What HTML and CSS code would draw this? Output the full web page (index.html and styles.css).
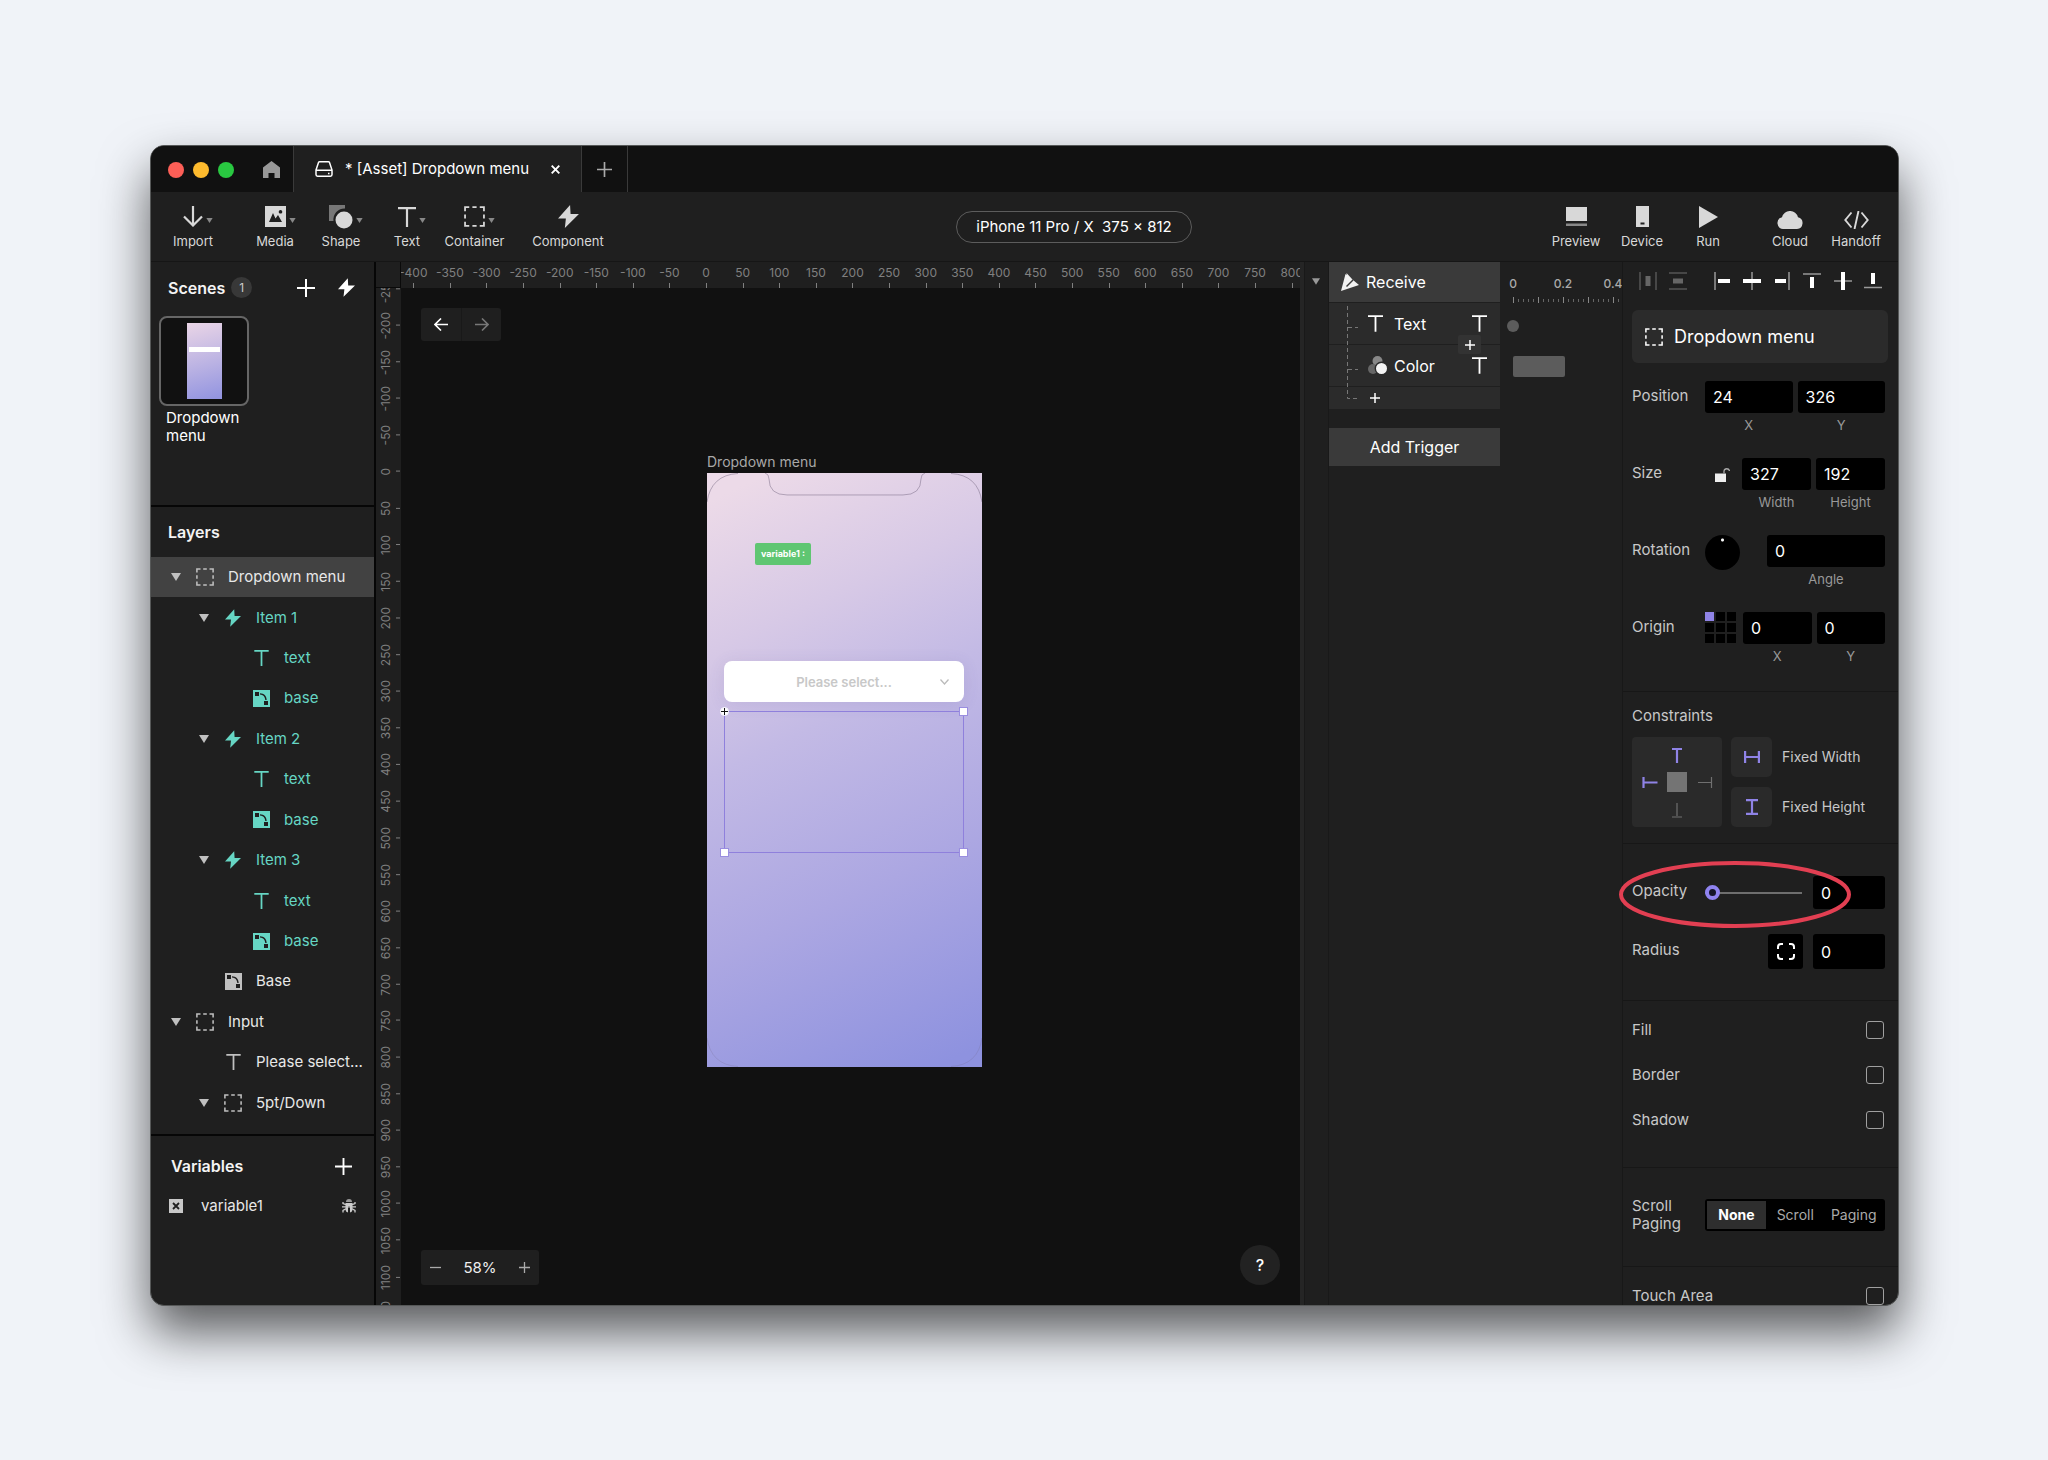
FILE: index.html
```html
<!DOCTYPE html>
<html lang="en">
<head>
<meta charset="utf-8">
<meta name="viewport" content="width=device-width, initial-scale=1">
<title>[Asset] Dropdown menu</title>
<link rel="stylesheet" href="styles.css">
</head>
<body>
<svg class="sprite" aria-hidden="true">
  <symbol id="i-bolt" viewBox="0 0 20 22"><path d="M11.500 0 0 13h7.500L6.500 22 20 8.500h-8z" fill="currentColor"/></symbol>
  <symbol id="i-plus" viewBox="0 0 18 18"><path d="M9 0v18M0 9h18" stroke="currentColor" stroke-width="2" fill="none"/></symbol>
  <symbol id="i-type" viewBox="0 0 18 20"><path d="M0 1.200h18M9 1.200V20" stroke="currentColor" stroke-width="2.200" fill="none"/></symbol>
  <symbol id="i-frame" viewBox="0 0 20 20"><path d="M1 5V1h4M15 1h4v4M19 15v4h-4M5 19H1v-4M8 1h4M19 8v4M12 19H8M1 12V8" stroke="currentColor" stroke-width="1.700" fill="none"/></symbol>
  <symbol id="i-base" viewBox="0 0 17 17"><path fill-rule="evenodd" fill="currentColor" d="M0 0h17v17H0zM2 2v4h4V2zM11 11v4h4v-4zM7 3.200v1.300c3.200.2 5 2 5.300 5.500h1.400c-.3-4.500-2.700-6.700-6.700-6.800z"/></symbol>
  <symbol id="i-caret" viewBox="0 0 10 8"><path d="M0 0h10L5 8z" fill="currentColor"/></symbol>
</svg>

<div class="window">
  <header class="titlebar">
    <div class="lights"><i class="light red"></i><i class="light yellow"></i><i class="light green"></i></div>
    <button class="home" aria-label="Home"><svg width="17" height="18" viewBox="0 0 17 18"><path d="M8.500 0 17 6.500V17H11.500v-5h-6v5H0V6.500z" fill="currentColor"/></svg></button>
    <div class="tab">
      <svg width="18" height="16" viewBox="0 0 18 16" fill="none" stroke="currentColor" stroke-width="1.500"><path d="M1 9 3.500 1.500Q3.800.8 4.600.8h8.800q.8 0 1.100.7L17 9v4.500q0 1.700-1.500 1.700h-13Q1 15.200 1 13.500zM1 9.200h16M13 12.400h1.500"/></svg>
      <span>* [Asset] Dropdown menu</span>
      <button class="tab-close" aria-label="Close tab"><svg width="9" height="9" viewBox="0 0 9 9"><path d="m.7.7 7.600 7.600M8.300.7.700 8.300" stroke="currentColor" stroke-width="1.900"/></svg></button>
    </div>
    <button class="tab-add" aria-label="New tab"><svg width="15" height="15"><use href="#i-plus"/></svg></button>
  </header>

  <nav class="toolbar">
    <div class="tools">
      <button class="tool tool-first"><span class="tool-icon"><svg width="20" height="21" viewBox="0 0 20 21" fill="none" stroke="currentColor" stroke-width="2.200"><path d="M10 0v19.500M1 10.500l9 9 9-9"/></svg><svg class="more" width="7" height="5"><use href="#i-caret"/></svg></span>Import</button>
      <button class="tool"><span class="tool-icon"><svg width="21" height="21" viewBox="0 0 21 21"><path fill="currentColor" fill-rule="evenodd" d="M0 0h21v21H0zM4 16h13l-4-7-2.500 3.500L8 7zM15.500 4a1.800 1.800 0 1 0 .01 0z"/></svg><svg class="more" width="7" height="5"><use href="#i-caret"/></svg></span>Media</button>
      <button class="tool"><span class="tool-icon"><svg width="24" height="24" viewBox="0 0 24 24"><path d="M0 0h16v3.500A11 11 0 0 0 4.500 16H0z" fill="#777"/><circle cx="15" cy="15" r="8.500" fill="currentColor"/></svg><svg class="more" width="7" height="5"><use href="#i-caret"/></svg></span>Shape</button>
      <button class="tool"><span class="tool-icon"><svg width="18" height="20"><use href="#i-type"/></svg><svg class="more" width="7" height="5"><use href="#i-caret"/></svg></span>Text</button>
      <button class="tool tool-mid"><span class="tool-icon"><svg width="21" height="21"><use href="#i-frame"/></svg><svg class="more" width="7" height="5"><use href="#i-caret"/></svg></span>Container</button>
      <button class="tool tool-wide"><span class="tool-icon"><svg width="21" height="23"><use href="#i-bolt"/></svg></span>Component</button>
    </div>
    <button class="device">iPhone 11 Pro / X &nbsp;375 × 812</button>
    <div class="tools">
      <button class="tool"><span class="tool-icon"><svg width="21" height="20" viewBox="0 0 21 20"><path fill="currentColor" d="M0 0h21v14H0z"/><path fill="#888" d="M0 16.500h21V19H0z"/></svg></span>Preview</button>
      <button class="tool"><span class="tool-icon"><svg width="13" height="21" viewBox="0 0 13 21"><path fill="currentColor" fill-rule="evenodd" d="M0 0h13v21H0zM4.500 16.500v2h4v-2z"/></svg></span>Device</button>
      <button class="tool"><span class="tool-icon"><svg width="19" height="22" viewBox="0 0 19 22"><path fill="currentColor" d="m0 0 19 11L0 22z"/></svg></span>Run</button>
      <button class="tool tool-gap"><span class="tool-icon tool-icon-low"><svg width="26" height="18" viewBox="0 0 26 18"><path fill="currentColor" d="M6 18a6 6 0 0 1-1-11.800A8 8 0 0 1 13 0a8 8 0 0 1 8 6.200A6 6 0 0 1 20 18z"/></svg></span>Cloud</button>
      <button class="tool"><span class="tool-icon tool-icon-low"><svg width="25" height="18" viewBox="0 0 25 18" fill="none" stroke="currentColor" stroke-width="1.900"><path d="M7.500 1.500 1.300 9l6.200 7.500M17.500 1.500 23.700 9l-6.200 7.500M14.500 0l-4 18"/></svg></span>Handoff</button>
    </div>
  </nav>

  <div class="workspace">
    <aside class="sidebar">
      <section class="scenes">
        <div class="side-head">
          <h2>Scenes</h2><span class="count">1</span>
          <button class="push" aria-label="Add scene"><svg width="18" height="18"><use href="#i-plus"/></svg></button>
          <button class="bolt-btn" aria-label="Scene actions"><svg width="17" height="19"><use href="#i-bolt"/></svg></button>
        </div>
        <button class="scene"><span class="thumb"><span class="thumb-phone"><span class="thumb-bar"></span></span></span><span class="scene-name">Dropdown menu</span></button>
      </section>
      <section class="layers">
        <h2>Layers</h2>
        <ul class="tree">
          <li class="row selected"><svg class="caret" width="10" height="8"><use href="#i-caret"/></svg><span class="ico"><svg width="18" height="18"><use href="#i-frame"/></svg></span>Dropdown menu</li>
          <li class="row l1 comp"><svg class="caret" width="10" height="8"><use href="#i-caret"/></svg><span class="ico"><svg width="16" height="18"><use href="#i-bolt"/></svg></span>Item 1</li>
          <li class="row l2 comp"><span class="caret"></span><span class="ico"><svg width="15" height="16"><use href="#i-type"/></svg></span>text</li>
          <li class="row l2 comp"><span class="caret"></span><span class="ico"><svg width="17" height="17"><use href="#i-base"/></svg></span>base</li>
          <li class="row l1 comp"><svg class="caret" width="10" height="8"><use href="#i-caret"/></svg><span class="ico"><svg width="16" height="18"><use href="#i-bolt"/></svg></span>Item 2</li>
          <li class="row l2 comp"><span class="caret"></span><span class="ico"><svg width="15" height="16"><use href="#i-type"/></svg></span>text</li>
          <li class="row l2 comp"><span class="caret"></span><span class="ico"><svg width="17" height="17"><use href="#i-base"/></svg></span>base</li>
          <li class="row l1 comp"><svg class="caret" width="10" height="8"><use href="#i-caret"/></svg><span class="ico"><svg width="16" height="18"><use href="#i-bolt"/></svg></span>Item 3</li>
          <li class="row l2 comp"><span class="caret"></span><span class="ico"><svg width="15" height="16"><use href="#i-type"/></svg></span>text</li>
          <li class="row l2 comp"><span class="caret"></span><span class="ico"><svg width="17" height="17"><use href="#i-base"/></svg></span>base</li>
          <li class="row l1"><span class="caret"></span><span class="ico"><svg width="17" height="17"><use href="#i-base"/></svg></span>Base</li>
          <li class="row"><svg class="caret" width="10" height="8"><use href="#i-caret"/></svg><span class="ico"><svg width="18" height="18"><use href="#i-frame"/></svg></span>Input</li>
          <li class="row l1"><span class="caret"></span><span class="ico"><svg width="15" height="16"><use href="#i-type"/></svg></span>Please select...</li>
          <li class="row l1"><svg class="caret" width="10" height="8"><use href="#i-caret"/></svg><span class="ico"><svg width="18" height="18"><use href="#i-frame"/></svg></span>5pt/Down</li>
        </ul>
      </section>
      <section class="variables">
        <div class="var-head"><h2>Variables</h2><button class="push" aria-label="Add variable"><svg width="17" height="17"><use href="#i-plus"/></svg></button></div>
        <div class="var-row">
          <svg width="14" height="14" viewBox="0 0 14 14"><path d="M0 0h14v14H0z" fill="#c8c8c8"/><path d="m4 4 6 6M10 4l-6 6" stroke="#1f1f1f" stroke-width="1.800"/></svg>
          <span>variable1</span>
          <button class="push" aria-label="Debug variable"><svg width="14" height="14" viewBox="0 0 14 14"><path d="M4 3a3 3 0 0 1 6 0z" fill="#999"/><path d="M3.500 4h7v6q0 3-2.500 3.500V7H6v6.500Q3.500 13 3.500 10zM0 7.200h14v1.300H0z" fill="#ccc"/><path d="M1 3v1.500l3 1.200M13 3v1.500l-3 1.200M1 13.500v-2L4 9.800M13 13.500v-2L10 9.800" stroke="#ccc" stroke-width="1.300" fill="none"/></svg></button>
        </div>
      </section>
    </aside>

    <main class="stage">
      <div class="corner"></div>
      <div class="ruler-h"><div class="marks-h"><span>-400</span><span>-350</span><span>-300</span><span>-250</span><span>-200</span><span>-150</span><span>-100</span><span>-50</span><span>0</span><span>50</span><span>100</span><span>150</span><span>200</span><span>250</span><span>300</span><span>350</span><span>400</span><span>450</span><span>500</span><span>550</span><span>600</span><span>650</span><span>700</span><span>750</span><span>800</span></div></div>
      <div class="ruler-v"><div class="marks-v"><span>-250</span><span>-200</span><span>-150</span><span>-100</span><span>-50</span><span>0</span><span>50</span><span>100</span><span>150</span><span>200</span><span>250</span><span>300</span><span>350</span><span>400</span><span>450</span><span>500</span><span>550</span><span>600</span><span>650</span><span>700</span><span>750</span><span>800</span><span>850</span><span>900</span><span>950</span><span>1000</span><span>1050</span><span>1100</span><span>1150</span></div></div>
      <div class="canvas">
        <div class="history">
          <button aria-label="Back"><svg width="14" height="13" viewBox="0 0 14 13" fill="none" stroke="currentColor" stroke-width="1.600"><path d="M14 6.500H1M7 .5l-6 6 6 6"/></svg></button>
          <button class="off" aria-label="Forward"><svg width="14" height="13" viewBox="0 0 14 13" fill="none" stroke="currentColor" stroke-width="1.600"><path d="M0 6.500h13M7 .5l6 6-6 6"/></svg></button>
        </div>
        <div class="artboard">
          <div class="artboard-name">Dropdown menu</div>
          <div class="phone">
            <svg class="bezel" viewBox="0 0 275 595" preserveAspectRatio="none" fill="none" stroke="#6b5f78" stroke-opacity=".45">
              <path d="M0 29Q4 2 31 .5M244 .5Q271 2 275 29M58 0q4 1 4 6 0 16 18 16h116q18 0 18-16 0-5 4-6"/>
              <path stroke-opacity=".2" d="M0 566Q4 593 31 594.500M244 594.500Q271 593 275 566"/>
            </svg>
            <div class="badge">variable1 :</div>
            <div class="select">Please select...<svg width="9" height="6" viewBox="0 0 9 6" fill="none" stroke="#bbb" stroke-width="1.300"><path d="m.5.500 4 4.500 4-4.500"/></svg></div>
            <div class="selection"><i class="pivot"></i><i class="handle ne"></i><i class="handle sw"></i><i class="handle se"></i></div>
          </div>
        </div>
        <div class="zoom"><button aria-label="Zoom out"><svg width="11" height="11" viewBox="0 0 11 11"><path d="M0 5.500h11" stroke="currentColor" stroke-width="1.300"/></svg></button><output>58%</output><button aria-label="Zoom in"><svg width="11" height="11" viewBox="0 0 11 11"><path d="M0 5.500h11M5.500 0v11" stroke="currentColor" stroke-width="1.300"/></svg></button></div>
        <button class="help">?</button>
      </div>
    </main>

    <section class="interactions">
      <div class="gutter"><svg width="8" height="7"><use href="#i-caret"/></svg></div>
      <div class="triggers">
        <div class="trigger">
          <svg width="18" height="18" viewBox="0 0 18 18"><path d="M5.500 0 11 6 6.500 12zM12 7l6 5L0 18 4.500 1z" fill="#f2f2f2"/><path d="m12 7-6.500 6.500" stroke="#3a3a3a" stroke-width="1.500"/></svg>Receive
        </div>
        <div class="responses">
          <svg class="branches" width="12" height="96" viewBox="0 0 12 96" fill="none" stroke="#777" stroke-dasharray="4 3"><path d="M.5 0v92.500H11M1 21.500h10M1 63.500h10"/></svg>
          <div class="resp"><svg width="15" height="17"><use href="#i-type"/></svg><span>Text</span><svg class="push" width="15" height="17"><use href="#i-type"/></svg></div>
          <div class="resp"><svg width="19" height="19" viewBox="0 0 19 19"><circle cx="9.500" cy="5" r="5" fill="#888"/><circle cx="5" cy="13" r="5" fill="#666"/><circle cx="13.500" cy="12.500" r="6.200" fill="#f4f4f4" stroke="#2a2a2a" stroke-width="1.400"/></svg><span>Color</span><svg class="push" width="15" height="17"><use href="#i-type"/></svg></div>
          <div class="resp resp-add"><button aria-label="Add response"><svg width="10" height="10" viewBox="0 0 10 10"><path d="M5 0v10M0 5h10" stroke="currentColor" stroke-width="1.500"/></svg></button></div>
          <button class="insert" aria-label="Insert response"><svg width="10" height="10" viewBox="0 0 10 10"><path d="M5 0v10M0 5h10" stroke="currentColor" stroke-width="1.500"/></svg></button>
        </div>
        <button class="add-trigger">Add Trigger</button>
      </div>
      <div class="timeline">
        <div class="times"><span>0</span><span>0.2</span><span>0.4</span></div>
        <div class="time-ticks"></div>
        <div class="instant"></div>
        <div class="clip"></div>
      </div>
    </section>

    <aside class="inspector">
      <div class="align">
        <button class="off" aria-label="Distribute horizontally"><svg width="18" height="18" viewBox="0 0 18 18"><path d="M1 0v18M17 0v18" stroke="#555" stroke-width="1.500"/><path d="M6.500 4h5v10h-5z" fill="#666"/></svg></button>
        <button class="off wide" aria-label="Distribute vertically"><svg width="18" height="18" viewBox="0 0 18 18"><path d="M0 1h18M0 17h18" stroke="#555" stroke-width="1.500"/><path d="M4 6.500h10v5H4z" fill="#666"/></svg></button>
        <button aria-label="Align left"><svg width="18" height="18" viewBox="0 0 18 18"><path d="M2 0v18" stroke="#999" stroke-width="1.500"/><path d="M5 7h12v4H5z" fill="#fff"/></svg></button>
        <button aria-label="Align center"><svg width="18" height="18" viewBox="0 0 18 18"><path d="M9 0v18" stroke="#999" stroke-width="1.500"/><path d="M0 7h18v4H0z" fill="#fff"/></svg></button>
        <button aria-label="Align right"><svg width="18" height="18" viewBox="0 0 18 18"><path d="M16 0v18" stroke="#999" stroke-width="1.500"/><path d="M2 7h11v4H2z" fill="#fff"/></svg></button>
        <button aria-label="Align top"><svg width="18" height="18" viewBox="0 0 18 18"><path d="M0 2h18" stroke="#999" stroke-width="1.500"/><path d="M7 5h4v11H7z" fill="#fff"/></svg></button>
        <button aria-label="Align middle"><svg width="18" height="18" viewBox="0 0 18 18"><path d="M0 9h18" stroke="#999" stroke-width="1.500"/><path d="M7 0h4v18H7z" fill="#fff"/></svg></button>
        <button aria-label="Align bottom"><svg width="18" height="18" viewBox="0 0 18 18"><path d="M0 15.500h18" stroke="#999" stroke-width="1.500"/><path d="M7 1h4v11H7z" fill="#fff"/></svg></button>
      </div>
      <div class="object"><svg width="18" height="18"><use href="#i-frame"/></svg>Dropdown menu</div>

      <div class="props">
        <div class="prop"><span class="name">Position</span>
          <div class="field"><input id="px" value="24"><label for="px">X</label></div>
          <div class="field"><input id="py" value="326"><label for="py">Y</label></div>
        </div>
        <div class="prop"><span class="name">Size</span>
          <button class="lock" aria-label="Lock ratio"><svg width="15" height="15" viewBox="0 0 15 15"><path d="M0 6.500h11V15H0z" fill="#eee"/><path d="M9 6.500V4a2.800 2.800 0 0 1 5.500 0" stroke="#aaa" stroke-width="1.300" fill="none"/></svg></button>
          <div class="field"><input id="pw" value="327"><label for="pw">Width</label></div>
          <div class="field"><input id="ph" value="192"><label for="ph">Height</label></div>
        </div>
        <div class="prop"><span class="name">Rotation</span>
          <div class="dial"></div>
          <div class="field"><input id="pa" value="0"><label for="pa">Angle</label></div>
        </div>
        <div class="prop"><span class="name">Origin</span>
          <div class="origin"><i class="on"></i><i></i><i></i><i></i><i></i><i></i><i></i><i></i><i></i></div>
          <div class="field"><input id="ox" value="0"><label for="ox">X</label></div>
          <div class="field"><input id="oy" value="0"><label for="oy">Y</label></div>
        </div>
      </div>

      <section class="group constraints">
        <h3>Constraints</h3>
        <div class="pins-row">
          <svg class="pins" width="90" height="90" viewBox="0 0 90 90" fill="none"><path d="M40 12h10M45 12v14M11.500 40v11M11.500 45.500h14" stroke="#8f83e6" stroke-width="2.200"/><path d="M66 45.500h13M79.500 40v11M45 66v13M40 80h10" stroke="#707070" stroke-width="1.200"/><path d="M35 35h20v20H35z" fill="#747474"/></svg>
          <div class="fixes">
            <button class="fix"><span><svg width="16" height="12" viewBox="0 0 16 12" stroke="#8f83e6" stroke-width="2.200"><path d="M1.100 0v12M14.900 0v12M1 6h14"/></svg></span>Fixed Width</button>
            <button class="fix"><span><svg width="12" height="16" viewBox="0 0 12 16" stroke="#8f83e6" stroke-width="2.200"><path d="M0 1.100h12M0 14.900h12M6 1v14"/></svg></span>Fixed Height</button>
          </div>
        </div>
      </section>

      <section class="group look">
        <div class="line"><label class="name" for="op">Opacity</label><input id="op" type="range" min="0" max="100" value="0"><input class="short" value="0" aria-label="Opacity value"></div>
        <div class="line"><label class="name" for="rad">Radius</label><button class="corners" aria-label="Separate corners"><svg width="18" height="17" viewBox="0 0 18 17" fill="none" stroke="#fff" stroke-width="2"><path d="M1 6V4q0-3 3-3h2M12 1h2q3 0 3 3v2M17 11v2q0 3-3 3h-2M6 16H4q-3 0-3-3v-2"/></svg></button><input class="short" id="rad" value="0"></div>
        <svg class="callout" viewBox="0 0 232 67" fill="none"><ellipse cx="116" cy="33.500" rx="114" ry="31.500" stroke="#e23f52" stroke-width="4"/></svg>
      </section>

      <section class="group checks">
        <label class="check">Fill<input type="checkbox"></label>
        <label class="check">Border<input type="checkbox"></label>
        <label class="check">Shadow<input type="checkbox"></label>
      </section>

      <section class="group paging">
        <span class="name">Scroll Paging</span>
        <div class="segments"><button class="active">None</button><button>Scroll</button><button>Paging</button></div>
      </section>

      <section class="group touch">
        <label class="check">Touch Area<input type="checkbox"></label>
      </section>
    </aside>
  </div>
</div>
</body>
</html>
```
FILE: styles.css
```css
* { box-sizing: border-box; }
body {
  margin: 0;
  height: 100vh;
  padding: 145px 149px 154px 150px;
  display: flex;
  background: #f0f3f8;
  font-family: Inter, "Liberation Sans", sans-serif;
  font-size: 15px;
  line-height: 18px;
  color: #fff;
}
.sprite { position: absolute; width: 0; height: 0; }
svg { display: block; flex: none; }
h2, h3, ul { margin: 0; padding: 0; list-style: none; }
h2 { font-size: 16px; line-height: 20px; font-weight: 600; color: #f4f4f4; }
button {
  padding: 0;
  border: 0;
  background: none;
  font: inherit;
  color: inherit;
  display: flex;
  align-items: center;
  justify-content: center;
}
input { font: inherit; }
.push { margin-left: auto; }

.window {
  flex: 1;
  min-width: 0;
  display: flex;
  flex-direction: column;
  overflow: hidden;
  background: #1f1f1f;
  border: 1px solid #565858;
  border-radius: 14px;
  box-shadow: 0 26px 50px rgba(0, 0, 0, .63);
}

/* title bar */
.titlebar { flex: none; display: flex; height: 46px; background: #111; }
.lights { display: flex; align-items: center; gap: 9px; padding: 2px 0 0 17px; width: 99px; }
.light { width: 16px; height: 16px; border-radius: 50%; }
.red { background: #fd5f57; }
.yellow { background: #febb2e; }
.green { background: #29c841; }
.home { width: 44px; padding-top: 2px; color: #999; border-right: 1px solid #3a3a3a; }
.tab {
  width: 288px;
  padding: 0 21px;
  display: flex;
  align-items: center;
  background: #1f1f1f;
  border-right: 1px solid #3a3a3a;
}
.tab span { margin-left: 12px; }
.tab-close { margin-left: auto; }
.tab-add { width: 46px; color: #aaa; border-right: 1px solid #3a3a3a; }

/* toolbar */
.toolbar {
  flex: none;
  height: 70px;
  padding: 0 9px;
  display: flex;
  align-items: center;
  justify-content: space-between;
  border-bottom: 1px solid #161616;
}
.tools { display: flex; }
.tool { width: 66px; flex-direction: column; gap: 4px; font-size: 13px; line-height: 16px; color: #d8d8d8; }
.tool-first { margin-right: 16px; }
.tool-mid { width: 69px; }
.tool-wide { width: 74px; margin-left: 22px; }
.tool-gap { margin-left: 16px; }
.tool-icon { position: relative; height: 24px; display: flex; align-items: center; color: #d8d8d8; }
.tool-icon-low { padding-top: 6px; }
.more { position: absolute; left: 100%; top: 13px; margin-left: 3px; color: #888; }
.device { height: 32px; padding: 0 19px; border: 1px solid #5c5c5c; border-radius: 16px; }

.workspace { flex: 1; min-height: 0; display: flex; }

/* left sidebar */
.sidebar { flex: none; width: 225px; display: flex; flex-direction: column; border-right: 2px solid #060606; }
.scenes { height: 245px; border-bottom: 2px solid #060606; }
.side-head { display: flex; align-items: center; height: 54px; padding: 0 19px 3px 17px; }
.count { margin-left: 6px; width: 21px; height: 21px; border-radius: 50%; background: #383838; color: #ccc; font-size: 12px; line-height: 21px; text-align: center; }
.bolt-btn { margin-left: 23px; }
.scene { margin-left: 8px; width: 90px; display: block; text-align: left; }
.thumb { display: flex; align-items: center; justify-content: center; height: 90px; background: #111; border: 2px solid #666; border-radius: 8px; }
.thumb-phone { width: 35px; height: 76px; padding: 24px 2px; background: linear-gradient(165deg, #ead5e6, #bab2e3 55%, #9193e0); }
.thumb-bar { display: block; height: 5px; background: #fff; }
.scene-name { display: block; padding: 3px 0 0 7px; }
.layers { flex: 1; min-height: 0; display: flex; flex-direction: column; padding-bottom: 11px; border-bottom: 2px solid #060606; }
.layers h2 { padding: 15px 17px; }
.tree { flex: 1; display: flex; flex-direction: column; }
.row { flex: 1; display: flex; align-items: center; padding-left: 20px; color: #e8e8e8; }
.selected { background: #424242; }
.l1 { padding-left: 48px; }
.l2 { padding-left: 76px; }
.comp { color: #66d6c4; }
.caret { width: 10px; color: #c0c0c0; }
.ico { width: 18px; margin: 0 14px 0 15px; display: flex; justify-content: center; }
.row:not(.comp) .ico { color: #c0c0c0; }
.variables { height: 169px; padding: 20px 18px 0 20px; }
.var-head, .var-row { display: flex; align-items: center; }
.var-head { height: 20px; padding-right: 4px; }
.var-row { margin: 21px 0 0 -2px; color: #e8e8e8; }
.var-row span { margin-left: 18px; }

/* rulers and canvas */
.stage { flex: 1; min-width: 0; display: grid; grid-template: 26px 1fr / 25px 1fr; overflow: hidden; }
.corner { border-right: 1px solid #0a0a0a; border-bottom: 1px solid #0a0a0a; }
.ruler-h, .ruler-v { overflow: hidden; min-width: 0; min-height: 0; font-size: 12px; line-height: 14px; color: #808080; }
.marks-h { width: 915px; height: 26px; margin-left: -6px; display: grid; grid-template-columns: repeat(25, 1fr); justify-items: center; }
.marks-h span { white-space: nowrap; padding-top: 4px; position: relative; }
.marks-h span::after { content: ""; position: absolute; left: 50%; bottom: 0; width: 1px; height: 5px; background: #808080; }
.marks-v { width: 25px; height: 1061px; margin-top: -17px; display: grid; grid-template-rows: repeat(29, 1fr); align-items: center; }
.marks-v span { writing-mode: vertical-rl; transform: rotate(180deg); width: 25px; line-height: 19px; position: relative; text-align: center; }
.marks-v span::after { content: ""; position: absolute; left: 1px; top: 50%; width: 4px; height: 1px; background: #808080; }
.canvas { position: relative; overflow: hidden; background: #111; }
.history { position: absolute; left: 20px; top: 20px; display: flex; background: #1f1f1f; border-radius: 3px; }
.history button { width: 40px; height: 33px; }
.history .off { color: #777; border-left: 1px solid #191919; }
.artboard { position: absolute; left: 306px; top: 165px; width: 275px; }
.artboard-name { font-size: 14px; line-height: 18px; margin-bottom: 2px; color: #a8a8a8; }
.phone { position: relative; height: 594px; background: linear-gradient(155deg, #ecdae8 4%, #d7c9e6 25%, #c3bae5 42%, #aca7e2 68%, #8e92df 97%); }
.bezel { position: absolute; inset: 0; width: 100%; height: 100%; }
.badge { position: absolute; left: 48px; top: 70px; width: 56px; height: 22px; border-radius: 2px; background: #5fc672; font-size: 9px; font-weight: 700; line-height: 22px; text-align: center; white-space: nowrap; }
.select {
  position: absolute;
  left: 17px;
  right: 18px;
  top: 188px;
  height: 41px;
  display: flex;
  align-items: center;
  justify-content: center;
  border-radius: 8px;
  background: #fff;
  box-shadow: 0 2px 16px rgba(90, 80, 150, .12);
  color: #c8c8c8;
  font-size: 13px;
  font-weight: 600;
}
.select svg { position: absolute; right: 15px; }
.selection { position: absolute; left: 17px; right: 18px; top: 238px; height: 142px; border: 1px solid #8f80dc; }
.handle, .pivot { position: absolute; width: 7px; height: 7px; background: #fff; outline: 1px solid #9a8ee0; }
.ne { right: -4px; top: -4px; }
.sw { left: -4px; bottom: -4px; }
.se { right: -4px; bottom: -4px; }
.pivot { left: -4px; top: -4px; border-radius: 50%; outline-color: #fff; background: linear-gradient(#111, #111) center / 7px 1px no-repeat, linear-gradient(#111, #111) center / 1px 7px no-repeat, #fff; }
.zoom { position: absolute; left: 20px; bottom: 20px; width: 118px; height: 35px; padding: 0 9px; display: flex; align-items: center; justify-content: space-between; background: #1f1f1f; border-radius: 3px; color: #aaa; }
.zoom output { color: #eee; }
.help { position: absolute; right: 20px; bottom: 20px; width: 40px; height: 40px; border-radius: 50%; background: #222; font-size: 16px; font-weight: 500; }

/* interactions and timeline */
.interactions { flex: none; width: 322px; display: flex; border-left: 4px solid #252525; font-size: 16px; }
.gutter { width: 25px; padding: 16px 0 0 7px; color: #999; border-left: 1px solid #191919; border-right: 1px solid #191919; }
.triggers { width: 171px; }
.trigger { height: 40px; padding-left: 12px; display: flex; align-items: center; gap: 7px; background: #3a3a3a; }
.responses { position: relative; }
.resp { height: 41px; margin-top: 1px; padding: 0 13px 0 39px; display: flex; align-items: center; background: #2b2b2b; }
.resp span { position: absolute; left: 65px; }
.resp-add { height: 22px; padding-left: 41px; }
.branches { position: absolute; left: 18px; top: 3px; z-index: 1; }
.insert { position: absolute; left: 129px; top: 32px; width: 23px; height: 19px; background: #333; border-radius: 2px; }
.add-trigger { width: 100%; height: 38px; margin-top: 19px; background: #3a3a3a; }
.timeline { flex: 1; min-width: 0; overflow: hidden; padding: 15px 0 0 13px; }
.times { display: flex; gap: 10px; margin-left: -20px; font-size: 12px; line-height: 14px; font-weight: 500; color: #aaa; }
.times span { flex: none; width: 40px; text-align: center; }
.time-ticks { height: 6px; margin-top: 6px; background: repeating-linear-gradient(90deg, #888 0 1px, transparent 1px 25px) 0 0 / 100% 6px no-repeat, repeating-linear-gradient(90deg, #666 0 1px, transparent 1px 5px) 0 2px / 100% 3px no-repeat; }
.instant { width: 12px; height: 12px; margin: 17px 0 0 -6px; border-radius: 50%; background: #5c5c5c; }
.clip { width: 52px; height: 21px; margin-top: 24px; border-radius: 2px; background: #5c5c5c; }

/* inspector */
.inspector { flex: none; width: 276px; overflow-x: visible; overflow-y: clip; border-left: 1px solid #181818; color: #c8c8c8; }
.align { display: flex; align-items: center; height: 38px; padding: 0 16px; justify-content: space-between; }
.align .wide { margin-right: 13px; }
.object { margin: 10px 10px 18px 9px; height: 53px; padding-left: 13px; display: flex; align-items: center; gap: 11px; border-radius: 6px; background: #2b2b2b; color: #fff; font-size: 18px; }
.props { padding: 0 13px 0 9px; }
.prop { display: flex; gap: 5px; height: 77px; }
.name { flex: none; width: 68px; padding-top: 6px; }
.field { flex: 1; min-width: 0; }
.field input, .short { width: 100%; height: 32px; padding: 0 8px; border: 0; border-radius: 3px; background: #000; color: #fff; font-size: 16px; }
.field label { display: block; margin-top: 4px; text-align: center; font-size: 13px; line-height: 16px; color: #999; }
.lock { width: 32px; height: 32px; padding-left: 2px; }
.dial { width: 35px; height: 35px; margin-right: 22px; border-radius: 50%; background: radial-gradient(circle at 50% 5px, #fff 1px, #000 2px); }
.origin { width: 33px; height: 32px; display: grid; grid-template-columns: repeat(3, 9px); grid-auto-rows: 9px; gap: 2px; }
.origin i { background: #000; }
.origin .on { background: #8f83e6; }
.group { position: relative; padding: 0 13px 0 9px; border-top: 1px solid #171717; }
.constraints { margin-top: 2px; padding-top: 14px; padding-bottom: 16px; }
h3 { font-size: 15px; line-height: 20px; font-weight: 400; }
.pins-row { display: flex; gap: 9px; margin-top: 11px; }
.pins { border-radius: 4px; background: #2a2a2a; }
.fixes { display: flex; flex-direction: column; justify-content: space-between; }
.fix { gap: 10px; justify-content: flex-start; font-size: 14px; }
.fix span { width: 41px; height: 40px; display: flex; align-items: center; justify-content: center; border-radius: 5px; background: #2a2a2a; }
.look { padding-top: 32px; padding-bottom: 31px; }
.line { display: flex; align-items: center; height: 33px; }
.line + .line { margin-top: 25px; height: 35px; }
.line .name { width: 73px; padding: 0 0 4px; }
.line .short { width: 72px; height: 100%; margin-left: auto; }
input[type="range"] { appearance: none; width: 97px; margin: 0; height: 15px; background: linear-gradient(#6e6e6e, #6e6e6e) center / 100% 2px no-repeat; }
input[type="range"]::-webkit-slider-thumb { appearance: none; width: 15px; height: 15px; border: 4px solid #8f83f0; border-radius: 50%; background: #15152a; }
.corners { margin-left: auto; width: 35px; height: 35px; border-radius: 3px; background: #000; }
.line .corners + .short { margin-left: 10px; }
.callout { position: absolute; left: -4px; top: 17px; width: 232px; height: 67px; pointer-events: none; }
.checks { padding-top: 6px; padding-bottom: 25px; }
.check { height: 45px; display: flex; align-items: center; justify-content: space-between; }
.check input { appearance: none; width: 18px; height: 18px; margin: 0 1px 0 0; border: 1px solid #a0a0a0; border-radius: 3px; }
.paging { height: 99px; padding-bottom: 4px; display: flex; align-items: center; }
.paging .name { width: 73px; padding: 0 20px 0 0; }
.segments { flex: 1; height: 32px; padding: 2px; display: flex; border-radius: 3px; background: #000; font-size: 14px; color: #aaa; }
.segments button { flex: 1; }
.segments .active { flex: none; width: 59px; background: #2e2e2e; color: #fff; font-weight: 700; }
.touch { padding-top: 6px; }
```
